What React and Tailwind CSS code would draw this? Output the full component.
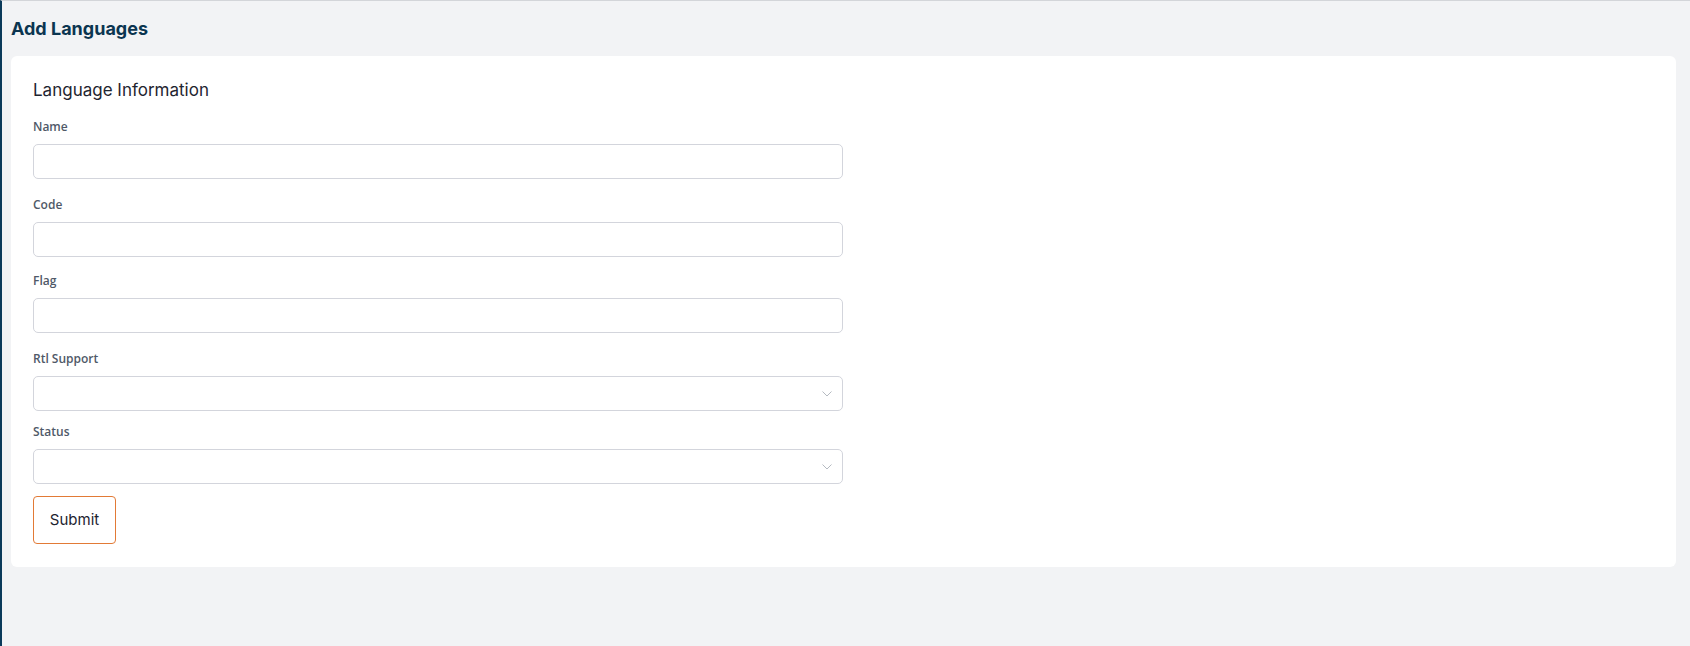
import React from 'react';

const Chevron = () => (
    <svg width="10" height="6" viewBox="0 0 10 6" fill="none" className="absolute right-[10px] top-1/2 -translate-y-1/2">
        <path d="M0.5 0.5 L5 5 L9.5 0.5" stroke="#b5bac1" strokeWidth="1" />
    </svg>
);

const Label = ({ children }) => (
    <label className="block text-[12px] leading-[18px] font-semibold text-[#4f5968] mb-[8px] font-['Open_Sans',sans-serif]">
        {children}
    </label>
);

const TextField = ({ label, className }) => (
    <div className={className}>
        <Label>{label}</Label>
        <input type="text" className="block w-full h-[35px] rounded-[5px] border border-[#d3d5dc] bg-white outline-none" />
    </div>
);

const SelectField = ({ label, className }) => (
    <div className={className}>
        <Label>{label}</Label>
        <div className="relative w-full h-[35px] rounded-[5px] border border-[#d3d5dc] bg-white">
            <Chevron />
        </div>
    </div>
);

const App = () => {
    return (
        <div className="min-h-[646px] bg-[#f2f3f5] border-l-[2px] border-l-[#0b3a5a] border-t border-t-[#d3d5d9] font-['Inter',sans-serif]">
            {/* Page header */}
            <div className="h-[55px] flex items-center pl-[9px]">
                <h1 className="text-[18px] font-bold text-[#0b3550]">Add Languages</h1>
            </div>

            {/* Form card */}
            <div className="ml-[9px] mr-[14px] bg-white rounded-[6px] px-[22px] pt-[21px] pb-[23px]">
                <h2 className="text-[17px] leading-[27px] font-normal text-[#1f2530]">Language Information</h2>
                <div className="w-[810px]">
                    <TextField label="Name" className="mt-[14px]" />
                    <TextField label="Code" className="mt-[17px]" />
                    <TextField label="Flag" className="mt-[15px]" />
                    <SelectField label="Rtl Support" className="mt-[17px]" />
                    <SelectField label="Status" className="mt-[12px]" />
                    <button className="mt-[12px] w-[83px] h-[48px] rounded-[4px] border border-[#e27a36] bg-white text-[15px] text-[#1d2330] font-normal">
                        Submit
                    </button>
                </div>
            </div>
        </div>
    );
};

export default App;
